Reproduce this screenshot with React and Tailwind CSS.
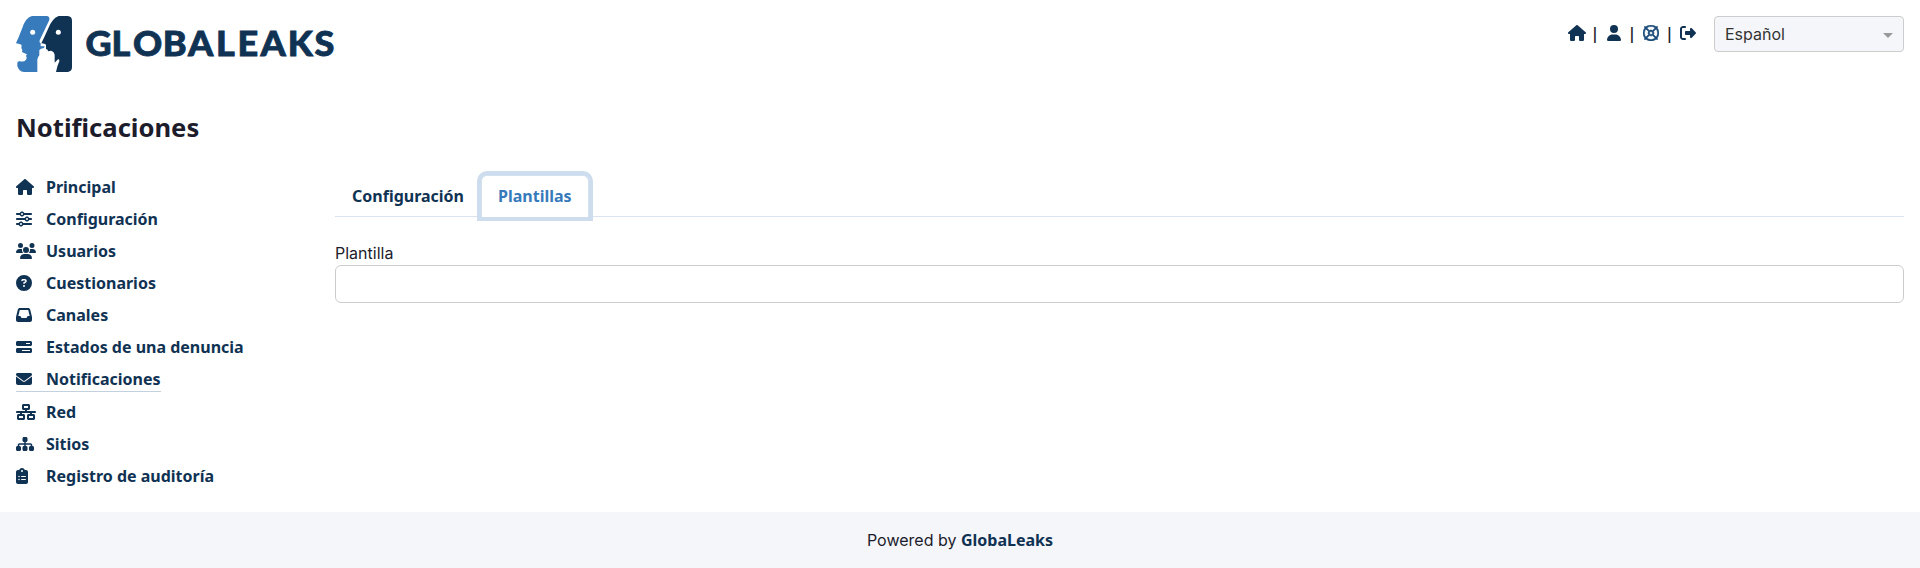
import React from "react";
import {
  FaHouse, FaUser, FaRegLifeRing, FaRightFromBracket, FaSliders, FaUsers,
  FaCircleQuestion, FaInbox, FaBarsProgress, FaEnvelope, FaNetworkWired,
  FaSitemap, FaClipboardList,
} from "react-icons/fa6";

const NAV = [
  { label: "Principal", Icon: FaHouse, size: "h-4 w-[18px]" },
  { label: "Configuración", Icon: FaSliders, size: "h-4 w-4" },
  { label: "Usuarios", Icon: FaUsers, size: "h-4 w-5" },
  { label: "Cuestionarios", Icon: FaCircleQuestion, size: "h-4 w-4" },
  { label: "Canales", Icon: FaInbox, size: "h-4 w-4" },
  { label: "Estados de una denuncia", Icon: FaBarsProgress, size: "h-4 w-4" },
  { label: "Notificaciones", Icon: FaEnvelope, size: "h-4 w-4", active: true },
  { label: "Red", Icon: FaNetworkWired, size: "h-4 w-5" },
  { label: "Sitios", Icon: FaSitemap, size: "h-4 w-[18px]" },
  { label: "Registro de auditoría", Icon: FaClipboardList, size: "h-4 w-3" },
];

function Logo() {
  return (
    <svg className="block h-14 w-[322px]" viewBox="0 0 322 56" role="img" aria-label="GlobaLeaks">
      <g transform="scale(0.33333)">
        <path
          fill="#377bbc"
          d="M48 0H92Q102 1 100 12L71 73Q69 80 74 82V91H86L84 96Q73 97 70 102V118Q66 122 64 130V168H24Q8 166 4 150V140Q5 134 12 136Q25 139 30 131Q34 126 30 119L33 115Q26 112 18 108L19 102Q14 96 17 89Q17 84 0 82Q2 76 7 66L18 38Q29 4 48 0Z"
        />
        <path
          fill="#103253"
          d="M128 0H155Q168 1 168 14V154Q168 166 156 168H120Q123 151 130 136Q131 129 126 130L116 140L116 118Q116 108 105 104L96 106L95 101L90 99V88Q91 84 76 82L84 65L96 39Q109 6 128 0Z"
        />
        <circle cx="50" cy="49" r="7.5" fill="#fff" />
        <circle cx="127" cy="49" r="7.5" fill="#fff" />
      </g>
      <text
        transform="translate(69 40) scale(1.06 1)"
        x="0.5 25 45.4 73.4 97.2 123.6 143.8 165.6 191.2 216.4"
        y="-0.3"
        fill="#103253"
        stroke="#103253"
        strokeWidth="0.8"
        fontSize="34"
        className="font-['Lato',sans-serif] font-black"
      >
        GLOBALEAKS
      </text>
    </svg>
  );
}

export default function App() {
  return (
    <div className="flex h-[568px] flex-col bg-white font-['Inter',sans-serif] text-base leading-6 text-[#212529]">
      <header className="flex h-[72px] items-start justify-between px-4 pt-4">
        <Logo />
        <div className="flex items-start">
          <div className="flex h-[34px] items-center text-[#103253]">
            <FaHouse className="h-4 w-[18px]" />
            <span className="w-[20px] pr-0.5 text-center font-['Noto_Sans',sans-serif] font-semibold text-[#1c1c2b]">|</span>
            <FaUser className="ml-px h-4 w-[14px]" />
            <span className="w-[22px] text-center font-['Noto_Sans',sans-serif] font-semibold text-[#1c1c2b]">|</span>
            <FaRegLifeRing className="h-4 w-4 stroke-[16px] text-[#1b4a78]" />
            <span className="w-[21px] text-center font-['Noto_Sans',sans-serif] font-semibold text-[#1c1c2b]">|</span>
            <FaRightFromBracket className="h-4 w-4" />
          </div>
          <div className="ml-[18px] flex h-9 w-[190px] items-center justify-between rounded border border-[#ccc] bg-[#f5f6fa] pl-2.5 pr-2.5 text-[#333]">
            <span>Español</span>
            <span className="mt-0.5 border-x-[5px] border-t-[5px] border-x-transparent border-t-[#999]" />
          </div>
        </div>
      </header>

      <h1 className="mt-[39px] px-4 font-['Noto_Sans',sans-serif] text-[25.6px] font-bold leading-[34px] text-[#1c1c2b]">
        Notificaciones
      </h1>

      <div className="mt-[26px] flex flex-1 px-4">
        <nav className="flex w-[319px] flex-col items-start gap-2 pt-1 font-['Noto_Sans',sans-serif] font-bold text-[#103253]">
          {NAV.map(({ label, Icon, size, active }) => (
            <a
              key={label}
              className={
                active
                  ? "flex h-[25px] items-center border-b border-[#c3d0de]"
                  : "flex h-6 items-center"
              }
            >
              <span className="w-[30px]">
                <Icon className={size} />
              </span>
              {label}
            </a>
          ))}
        </nav>

        <main className="flex-1">
          <div className="mt-1 flex h-[42px] border-b border-[#dbe3f0] font-['Noto_Sans',sans-serif] font-bold">
            <a className="h-[42px] border border-transparent px-4 py-2 text-[#103253]">Configuración</a>
            <a className="h-[42px] rounded-t-md border border-b-0 border-[#d3e0ee] bg-white px-4 py-2 text-[#377abc] shadow-[0_0_0_4px_#cdddee]">
              Plantillas
            </a>
          </div>
          <label className="mt-6 block text-[#1c1c2b]">Plantilla</label>
          <div className="h-[38px] rounded-md border border-[#ccc]" />
        </main>
      </div>

      <footer className="flex h-14 items-center justify-center bg-[#f5f6fa] text-[#1c1c2b]">
        <span>
          Powered by{" "}
          <b className="font-['Noto_Sans',sans-serif] font-bold text-[#103253]">GlobaLeaks</b>
        </span>
      </footer>
    </div>
  );
}
